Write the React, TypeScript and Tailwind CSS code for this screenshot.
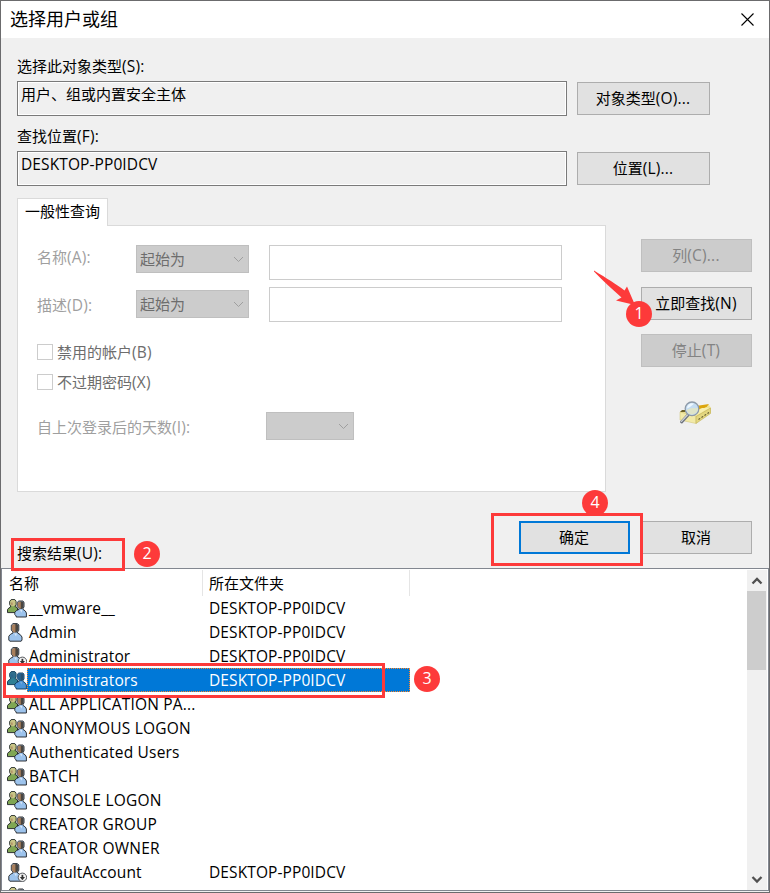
import React from 'react';

type IconKind = 'group' | 'user' | 'disabled';

interface Entry {
  name: string;
  icon: IconKind;
  folder?: string;
  selected?: boolean;
}

const HOST = 'DESKTOP-PP0IDCV';

const ENTRIES: Entry[] = [
  { name: '__vmware__', icon: 'group', folder: HOST },
  { name: 'Admin', icon: 'user', folder: HOST },
  { name: 'Administrator', icon: 'disabled', folder: HOST },
  { name: 'Administrators', icon: 'group', folder: HOST, selected: true },
  { name: 'ALL APPLICATION PA...', icon: 'group' },
  { name: 'ANONYMOUS LOGON', icon: 'group' },
  { name: 'Authenticated Users', icon: 'group' },
  { name: 'BATCH', icon: 'group' },
  { name: 'CONSOLE LOGON', icon: 'group' },
  { name: 'CREATOR GROUP', icon: 'group' },
  { name: 'CREATOR OWNER', icon: 'group' },
  { name: 'DefaultAccount', icon: 'disabled', folder: HOST },
  { name: '', icon: 'group' },
];

const EntryIcon: React.FC<{ kind: IconKind; selected?: boolean }> = ({ kind, selected }) => {
  const green = selected ? '#2f7f94' : '#7fa653';
  const hair = selected ? '#2f6d8c' : '#c9c487';
  const blue = selected ? '#4a94d8' : '#9dc3ec';
  const dark = selected ? '#27506f' : '#4b4640';
  const skin = selected ? '#28608c' : '#a87f5c';
  const line = selected ? '#0c3554' : '#1d2024';
  return (
    <svg width="20" height="20" viewBox="0 0 20 20" className="relative top-px shrink-0">
      {kind === 'group' ? (
        <>
          <path d="M.5 13.6V10.6L1.8 9 3.6 8V7L2.7 5.5V2.4L4.2.6H7.8L9 2V6L8 7.4 10.5 9V13.6Z" fill={green} stroke={line} strokeWidth=".9" />
          <path d="M3.2 5.5V2.5L4.5 1.1H7.5L8.5 2.4V5.4L7 7.2H4.7Z" fill={hair} />
          <path d="M3.6 3.6H5.6V6.2H4.3Z" fill={skin} opacity=".7" />
          <path d="M9.2 18V17L7.8 15.5V13.4L9.6 11.4 12 10.4V9.4L10.2 7.5V3.4L11.8 2H15.8L17 3.2V7.8L16 9.6V10.4L18.3 12 19.4 14V18Z" fill={blue} stroke={line} strokeWidth=".9" />
          <path d="M12.3 9V3L13 2.5H15.6L16.6 3.6V7.8L15.2 10H13Z" fill={dark} />
          <path d="M10.7 3.6 12 2.7H13.8V9.5H12.7L10.7 7.4Z" fill={skin} />
          <path d="M13 11 14.6 13.8 15.2 11Z" fill={selected ? '#75acd9' : '#d7e6f7'} />
        </>
      ) : (
        <>
          <path d="M2.8 18.2 1.8 17V13.2L3.6 11.2 6 10V9L4.3 7V2.2L6 .6H10.4L11.8 2V7.2L10.6 9V10L13.2 11.6 15 14V17L14.2 18.2Z" fill={blue} stroke={line} strokeWidth=".9" />
          <path d="M7 8V1.8L8 1.1H10.2L11.3 2.4V7L9.8 9.6H7.5Z" fill={dark} />
          <path d="M4.8 2.5 6.3 1.2H8.4V9.6H6.7L4.8 7Z" fill={skin} />
          <path d="M7.2 10.4 9 13.6 9.8 10.4Z" fill="#d7e6f7" />
        </>
      )}
      {kind === 'disabled' && (
        <>
          <circle cx="15.4" cy="14.3" r="4.2" fill="#f5f5f5" stroke="#55585c" strokeWidth="1" />
          <path d="M15.4 11.8v3" fill="none" stroke="#333" strokeWidth="1.8" />
          <path d="M12.8 14h5.2l-2.6 3.2z" fill="#333" />
        </>
      )}
    </svg>
  );
};

const SearchIcon: React.FC = () => (
  <svg width="34" height="26" viewBox="0 0 34 26">
    <path d="M2 12 12 8 31 5 33 8V13L18 23 2 19.5Z" fill="#efe397" />
    <path d="M2 12 18 16V23.5L2 20Z" fill="#f2eaa8" stroke="#cfc070" strokeWidth=".5" />
    <path d="M18 16.5 32.5 8V13.5L18 23.5Z" fill="#e3d67f" stroke="#b9a84f" strokeWidth=".5" />
    <path d="M2 12 4 10H10L8 12Z" fill="#6d6228" />
    <path d="M18 6 31 4 29 6.5 21 11Z" fill="#dca50d" />
    <path d="M6 12.3 18 15.5 31 8 24 8 15 12Z" fill="#f8efae" />
    <path d="M20.5 19.5 31 12.5" stroke="#5d5730" strokeWidth="1.1" strokeDasharray="2 1.6" />
    <path d="M10 15 3.6 22" stroke="#6f7580" strokeWidth="3" strokeLinecap="round" />
    <path d="M9.4 15 3.5 21.4" stroke="#d0d3d8" strokeWidth="1.2" strokeLinecap="round" />
    <circle cx="14" cy="8.8" r="6.8" fill="#c5ddf2" stroke="#8e9aa8" strokeWidth="1.3" />
    <path d="M8.3 10 13 8.2 20 8A6.2 6.2 0 0 1 10.5 13.5Z" fill="#dfe4c9" />
    <path d="M9 8.5A5 5 0 0 1 16 3.8L12 7Z" fill="#eef8ff" />
  </svg>
);

const Chevron: React.FC = () => (
  <svg width="11" height="7" viewBox="0 0 11 7" fill="none" stroke="#9f9f9f">
    <path d="M1 1l4.5 4.5L10 1" />
  </svg>
);

// The access key part of a label, e.g. "(S):"
const Key: React.FC<{ children: React.ReactNode }> = ({ children }) => (
  <span className="text-[15.5px] tracking-[0.2px]">{children}</span>
);

const Button: React.FC<{ children: React.ReactNode; className?: string; disabled?: boolean; primary?: boolean }> = ({
  children,
  className = '',
  disabled,
  primary,
}) => (
  <button
    className={`flex h-[33px] shrink-0 items-center justify-center pr-px pb-[2px] ${
      primary ? 'border-2 border-[#0078d7] bg-[#e1e1e1]' : disabled ? 'border border-[#bfbfbf] bg-[#ccc] text-[#838383]' : 'border border-[#adadad] bg-[#e1e1e1]'
    } ${className}`}
  >
    <span>{children}</span>
  </button>
);

const ReadOnlyField: React.FC<{ children: React.ReactNode }> = ({ children }) => (
  <div className="h-[35px] w-[550px] border border-[#7a7a7a] px-[3px] pt-[2px] leading-5 shadow-[inset_0_0_0_1px_#fff]">{children}</div>
);

const Combo: React.FC<{ children?: React.ReactNode; className: string }> = ({ children, className }) => (
  <div className={`flex h-7 items-center justify-between border border-[#bfbfbf] bg-[#ccc] pr-[4px] pl-[3px] text-[#6d6d6d] ${className}`}>
    <span>{children}</span>
    <Chevron />
  </div>
);

const CheckRow: React.FC<{ children: React.ReactNode }> = ({ children }) => (
  <div className="flex h-[30px] items-center gap-1 text-[#6d6d6d]">
    <span className="size-4 border border-[#ccc] bg-white" />
    <span>{children}</span>
  </div>
);

const Badge: React.FC<{ children: React.ReactNode; className: string }> = ({ children, className }) => (
  <div className={`absolute flex size-[26px] items-center justify-center rounded-full bg-[#fd3a3a] pb-[2px] text-base text-white ${className}`}>
    {children}
  </div>
);

const App: React.FC = () => (
  <div className="relative flex h-[893px] w-[770px] flex-col overflow-hidden border border-[#6b6b6d] bg-[#f0f0f0] font-['Open_Sans','Noto_Sans_CJK_SC',sans-serif] text-[15px] leading-5 whitespace-nowrap text-black">
    <header className="flex h-[37px] shrink-0 items-center justify-between bg-white pr-[15px] pl-[9px] text-lg">
      <h1 className="-mt-px">选择用户或组</h1>
      <svg width="13" height="13" viewBox="0 0 13 13" fill="none" stroke="#000" strokeWidth="1.1">
        <path d="M.5.5l12 12M12.5.5l-12 12" />
      </svg>
    </header>

    <section className="h-[160px] shrink-0 pt-[18px] pl-4">
      <div className="h-5">选择此对象类型<Key>(S):</Key></div>
      <div className="mt-[5px] flex items-center gap-[10px]">
        <ReadOnlyField>用户、组或内置安全主体</ReadOnlyField>
        <Button className="w-[133px]">对象类型<Key>(O)...</Key></Button>
      </div>
      <div className="mt-[10px] h-5">查找位置<Key>(F):</Key></div>
      <div className="mt-[5px] flex items-center gap-[10px]">
        <ReadOnlyField><span className="text-[15.5px] tracking-[0.1px]">{HOST}</span></ReadOnlyField>
        <Button className="w-[133px]">位置<Key>(L)...</Key></Button>
      </div>
    </section>

    <section className="flex h-[323px] shrink-0 pl-4">
      <div className="w-[589px]">
        <div className="relative z-10 h-7 w-[91px] border border-b-0 border-[#dadada] bg-white pt-[2px] pl-[7px]">一般性查询</div>
        <div className="-mt-px h-[267px] border border-[#dadada] bg-white pt-[19px] pl-[19px]">
          <div className="flex h-[42px] items-start text-[#9f9f9f]">
            <span className="mt-[2px] w-[99px]">名称<Key>(A):</Key></span>
            <Combo className="w-[113px]">起始为</Combo>
            <div className="ml-5 h-[35px] w-[293px] border border-[#ccc]" />
          </div>
          <div className="flex h-[50px] items-start text-[#9f9f9f]">
            <span className="mt-[8px] w-[99px]">描述<Key>(D):</Key></span>
            <Combo className="mt-[3px] w-[113px]">起始为</Combo>
            <div className="ml-5 h-[35px] w-[293px] border border-[#ccc]" />
          </div>
          <CheckRow>禁用的帐户<Key>(B)</Key></CheckRow>
          <CheckRow>不过期密码<Key>(X)</Key></CheckRow>
          <div className="mt-[15px] flex h-7 items-center text-[#9f9f9f]">
            <span className="w-[229px] pt-[2px]">自上次登录后的天数<Key>(I):</Key></span>
            <Combo className="w-[88px]" />
          </div>
        </div>
      </div>
      <div className="ml-[35px] flex w-[111px] flex-col items-center pt-[41px]">
        <Button className="w-full" disabled>列<Key>(C)...</Key></Button>
        <Button className="mt-[15px] w-full">立即查找<Key>(N)</Key></Button>
        <Button className="mt-[14px] w-full" disabled>停止<Key>(T)</Key></Button>
        <div className="mt-[33px] mr-[3px]"><SearchIcon /></div>
      </div>
    </section>

    <section className="flex h-[47px] shrink-0 items-start pl-4">
      <div className="mt-[22px] w-[502px]">搜索结果<Key>(U):</Key></div>
      <Button className="w-[111px]" primary>确定</Button>
      <Button className="ml-[11px] w-[111px]">取消</Button>
    </section>

    <section className="flex h-[323px] shrink-0 border border-[#828790] bg-white pt-px pr-px">
      <div className="min-w-0 flex-1 overflow-hidden">
        <div className="flex h-[26px] items-center">
          <div className="h-full w-[201px] border-r border-[#e5e5e5] pt-[3px] pl-[7px]">名称</div>
          <div className="h-full w-[207px] border-r border-[#e5e5e5] pt-[3px] pl-[6px]">所在文件夹</div>
        </div>
        {ENTRIES.map((entry, i) => (
          <div key={i} className="flex h-6 items-center pl-[5px] text-[15.5px]">
            <EntryIcon kind={entry.icon} selected={entry.selected} />
            <div className={`flex h-6 w-[383px] items-center pl-[2px] ${entry.selected ? 'bg-[#0078d7] text-white outline-1 -outline-offset-1 outline-[#ff8728] outline-dotted' : ''}`}>
              <span className={`w-[180px] ${entry.folder ? 'tracking-[0.1px]' : 'tracking-[0.2px]'}`}>{entry.name}</span>
              <span className="tracking-[0.1px]">{entry.folder}</span>
            </div>
          </div>
        ))}
      </div>
      <div className="flex h-[320px] w-5 flex-col items-center bg-[#f0f0f0] text-[#505050]">
        <svg width="12" height="21" viewBox="0 0 12 21" fill="none" stroke="currentColor" strokeWidth="2.3">
          <path d="M1.5 13.5L6 9l4.5 4.5" />
        </svg>
        <div className="h-[79px] w-[19px] shrink-0 self-start bg-[#cdcdcd]" />
        <svg width="12" height="21" viewBox="0 0 12 21" fill="none" stroke="currentColor" strokeWidth="2.3" className="mt-auto">
          <path d="M1.5 8L6 12.5 10.5 8" />
        </svg>
      </div>
    </section>

    {/* step markers */}
    <svg className="absolute top-[268px] left-[592px]" width="44" height="40" viewBox="0 0 44 40">
      <path d="M1 1.5C14 9.5 23 15 31.5 21.5L34 17.5 42 36 23 31.5 28.5 28.5C20 21 10 12 1 2.5Z" fill="#fd3a3a" />
    </svg>
    <Badge className="top-[300px] left-[625px]">1</Badge>
    <Badge className="top-[540px] left-[133px]">2</Badge>
    <Badge className="top-[665px] left-[413px]">3</Badge>
    <Badge className="top-[489px] left-[581px]">4</Badge>
    <div className="absolute top-[537px] left-[10px] h-[33px] w-[114px] border-3 border-[#fd3a3a]" />
    <div className="absolute top-[512px] left-[490px] h-[53px] w-[152px] border-3 border-[#fd3a3a]" />
    <div className="absolute top-[662px] left-[2px] h-[35px] w-[382px] border-3 border-[#fd3a3a]" />
  </div>
);

export default App;
